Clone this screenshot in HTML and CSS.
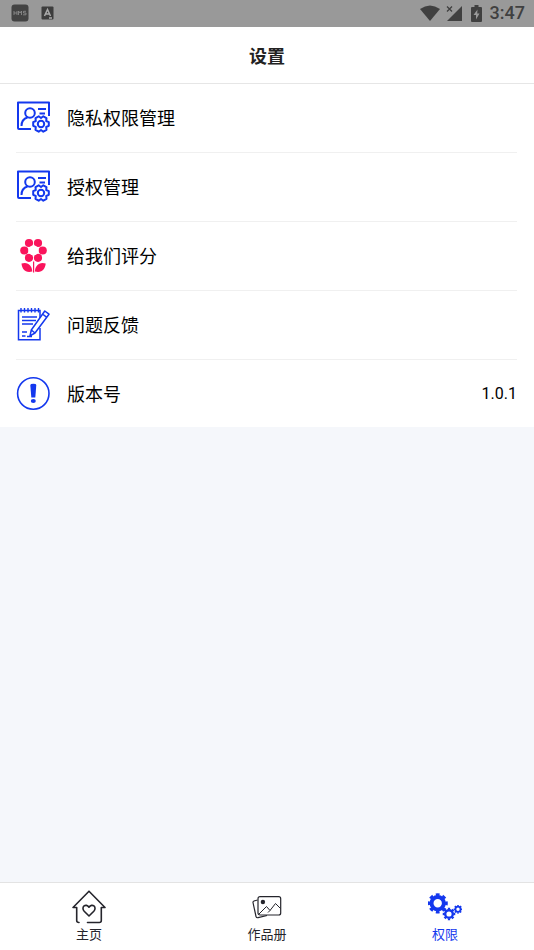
FILE: index.html
```html
<!DOCTYPE html>
<html lang="zh-CN">
<head>
<meta charset="utf-8">
<meta name="viewport" content="width=device-width, initial-scale=1">
<title>设置</title>
<link rel="stylesheet" href="styles.css">
</head>
<body>
<svg class="defs" aria-hidden="true">
  <symbol id="permission" viewBox="0 0 34 34">
    <g fill="none" stroke="currentColor" stroke-width="2" stroke-linejoin="round">
      <path d="M15 28H3Q2 28 2 27V1.500H33V15"/>
      <circle cx="14" cy="12" r="4.800"/>
      <path d="M5.500 25C5.500 20.500 8 17.500 11.500 16.500M22 8H30M23.500 12.500H29"/>
      <path d="M32.800 21.200V24.800L30.200 26L30.500 28.900L27.300 30.700L25 29L22.700 30.700L19.500 28.900L19.800 26L17.200 24.800V21.200L19.800 20L19.500 17.100L22.700 15.300L25 17L27.300 15.300L30.500 17.100L30.200 20Z"/>
      <circle cx="25" cy="23" r="3.200"/>
    </g>
  </symbol>
</svg>

<div class="status">
  <svg class="status-app" viewBox="0 0 18 18" aria-hidden="true">
    <rect x="0.500" y="0.500" width="17" height="17" rx="3" fill="#434343"/>
    <path d="M3 7v4M6 7v4M3 9h3M7.500 11V7l1.500 2 1.500-2v4M15 7.300h-2.500v1.700H15v1.800h-3" fill="none" stroke="#929292" stroke-width="0.800"/>
  </svg>
  <svg class="status-lang" viewBox="0 0 13 14" aria-hidden="true">
    <rect x="0.500" y="0.500" width="12" height="13" rx="1" fill="#3d3d3d"/>
    <path d="M3.500 10L6.500 3.500L9.500 10M4.500 8h4M8 12h3" fill="none" stroke="#aaa" stroke-width="1.500"/>
  </svg>
  <span class="spacer"></span>
  <svg class="status-wifi" viewBox="0 0 20 16" aria-hidden="true"><path d="M0 4Q10-3 20 4L10 16Z" fill="#404040"/></svg>
  <svg class="status-signal" viewBox="0 0 17 17" aria-hidden="true"><path d="M16 1V16H1Z" fill="#404040"/><path d="M0 0H8V7L5 11H0Z" fill="#999"/><path d="M1 1.500l5 5M6 1.500l-5 5" stroke="#404040" stroke-width="1.300"/></svg>
  <svg class="status-battery" viewBox="0 0 11 17" aria-hidden="true"><path d="M3.500 0h4v2H10q1 0 1 1v13q0 1-1 1H1q-1 0-1-1V3q0-1 1-1h2.500z" fill="#404040"/><path d="M6.500 4.500L2.500 10h2.500v4.500L8.500 8.500H6.200z" fill="#999"/></svg>
  <span class="time">3:47</span>
</div>

<header class="header"><h1>设置</h1></header>

<main class="main">
  <ul class="list">
    <li><button class="row" type="button"><svg class="icon"><use href="#permission"/></svg><span class="label">隐私权限管理</span></button></li>
    <li><button class="row" type="button"><svg class="icon"><use href="#permission"/></svg><span class="label">授权管理</span></button></li>
    <li><button class="row" type="button">
      <svg class="icon rose" viewBox="0 0 34 34" fill="currentColor">
        <circle cx="13" cy="4" r="4.100"/><circle cx="22" cy="4" r="4.100"/><circle cx="8.300" cy="11.500" r="4.100"/><circle cx="26.700" cy="11.500" r="4.100"/><circle cx="13" cy="18.800" r="4.100"/><circle cx="22" cy="18.800" r="4.100"/>
        <circle cx="17.500" cy="11.400" r="5" fill="#fff"/>
        <path d="M17 22.500h1.200v11H17zM5.500 24.500C12 22.500 16 26.500 16.300 32.500C9.500 34.500 6 30 5.500 24.500ZM29.700 24.500C23.200 22.500 19.200 26.500 18.900 32.500C25.700 34.500 29.200 30 29.700 24.500Z"/>
      </svg><span class="label">给我们评分</span></button></li>
    <li><button class="row" type="button">
      <svg class="icon" viewBox="0 0 34 34" fill="none" stroke="currentColor" stroke-width="1.500">
        <path d="M24 10V2.500H2.500V31.700H24V20"/>
        <path d="M5 0v4.500M8.500 0v4.500M12 0v4.500M15.500 0v4.500M19 0v4.500M22.500 0v4.500M6 9h15M6 12.500h14M6 16h11M6 24h5M6 28h3.500" stroke-width="1.400"/>
        <path d="M28.800 3L33 6.200L19 25L14 27.800L15.300 22ZM26.500 6L30.800 9.300M15.300 22L19 25M11 28.500h5" stroke-linejoin="round"/>
      </svg><span class="label">问题反馈</span></button></li>
    <li class="row">
      <svg class="icon" viewBox="0 0 34 34">
        <circle cx="17.300" cy="16.500" r="15.700" fill="none" stroke="currentColor" stroke-width="1.600"/>
        <path d="M14.300 8Q14.300 6.800 17.300 6.800T20.300 8L19.300 20.500H15.300Z" fill="currentColor"/><ellipse cx="17.300" cy="24" rx="2.500" ry="2" fill="currentColor"/>
      </svg><span class="label">版本号</span><span class="value">1.0.1</span></li>
  </ul>
</main>

<nav class="tabs">
  <a class="tab" href="#home">
    <svg class="icon" viewBox="0 0 34 34" fill="none" stroke="currentColor" stroke-width="1.600" stroke-linejoin="round" stroke-linecap="round">
      <path d="M7 32.500Q4.700 32.500 4.700 30.500V17.500H1L17 1.200L33 17.500H29.300V30.500Q29.300 32.500 27.300 32.500H15.500"/>
      <path d="M17 26L12.200 21.200C8.500 17 14 12.800 17 17.200C20 12.800 25.500 17 21.800 21.200Z"/>
    </svg><span>主页</span></a>
  <a class="tab" href="#album">
    <svg class="icon" viewBox="0 0 34 34" fill="none" stroke="currentColor" stroke-width="1.200" stroke-linejoin="round">
      <path d="M7.500 10L4 11Q2.800 11.500 3 12.500L6 26.500Q6.500 28 8 27.700L17 25.500"/>
      <rect x="8" y="6.700" width="22.700" height="18.300" rx="2"/>
      <path d="M8.500 24.500L16.500 16.500L20 20.500L25.500 13.500L30.500 18.500M18 22.500L20 20.500" stroke-width="1"/>
      <circle cx="12.900" cy="12" r="2.200" fill="currentColor" stroke="none"/>
    </svg><span>作品册</span></a>
  <a class="tab active" href="#settings" aria-current="page">
    <svg class="icon" viewBox="0 0 34 34" fill="none" stroke="currentColor">
      <circle cx="9.700" cy="13.300" r="6.200" stroke-width="4"/><circle cx="9.700" cy="13.300" r="8.700" stroke-width="2.800" pathLength="80" stroke-dasharray="5.500 4.500" stroke-dashoffset="2.750"/>
      <circle cx="21" cy="24" r="3.800" stroke-width="2.400"/><circle cx="21" cy="24" r="5.400" stroke-width="1.800" pathLength="80" stroke-dasharray="5.500 4.500" stroke-dashoffset="2.750"/>
      <circle cx="30" cy="19.300" r="2.600" stroke-width="1.800"/><circle cx="30" cy="19.300" r="3.700" stroke-width="1.400" pathLength="80" stroke-dasharray="5.500 4.500" stroke-dashoffset="2.750"/>
    </svg><span>权限</span></a>
</nav>
</body>
</html>
```
FILE: styles.css
```css
* { box-sizing: border-box; }

body {
  margin: 0;
  min-height: 100vh;
  display: flex;
  flex-direction: column;
  background: #f5f7fb;
  color: #000;
  font-family: Roboto, "Noto Sans CJK SC", sans-serif;
}

.defs { display: none; }

.status {
  display: flex;
  align-items: center;
  height: 27px;
  padding: 0 9px 1px 11px;
  background: #999;
}
.status-app { width: 18px; height: 18px; margin-right: 12px; }
.status-lang { width: 13px; height: 14px; }
.spacer { flex: 1; }
.status-wifi { width: 20px; height: 16px; margin-right: 6px; }
.status-signal { width: 17px; height: 17px; margin-right: 8px; }
.status-battery { width: 11px; height: 17px; margin-right: 8px; }
.time { color: #404040; font-size: 18px; font-weight: 500; line-height: 26px; }

.header {
  height: 57px;
  display: flex;
  align-items: center;
  justify-content: center;
  padding-top: 4px;
  background: #fff;
  border-bottom: 1px solid #e6e6e6;
}
.header h1 { margin: 0; color: #222; font-size: 18px; font-weight: 700; line-height: 24px; }

.main { flex: 1; }
.list { margin: 0; padding: 0 17px 0 16px; list-style: none; background: #fff; }
.list li + li { border-top: 1px solid #f0f0f0; }

.row {
  display: flex;
  align-items: center;
  gap: 17px;
  width: 100%;
  height: 68px;
  padding: 0;
  border: 0;
  background: none;
  color: inherit;
  font: inherit;
  font-size: 18px;
  line-height: 24px;
  text-align: left;
}
.icon { width: 34px; height: 34px; flex: none; }
.row .icon { color: #1438ee; overflow: visible; }
.row .rose { color: #fa145c; }
.label { padding-top: 2px; }
.value { margin-left: auto; padding-top: 1px; font-size: 16px; }

.tabs {
  display: flex;
  height: 68px;
  background: #fff;
  border-top: 1px solid #e3e3e3;
}
.tab {
  flex: 1;
  display: flex;
  flex-direction: column;
  align-items: center;
  padding-top: 7px;
  color: #25252c;
  font-size: 13px;
  line-height: 22px;
  text-decoration: none;
}
.tab.active { color: #1438ee; }
```
